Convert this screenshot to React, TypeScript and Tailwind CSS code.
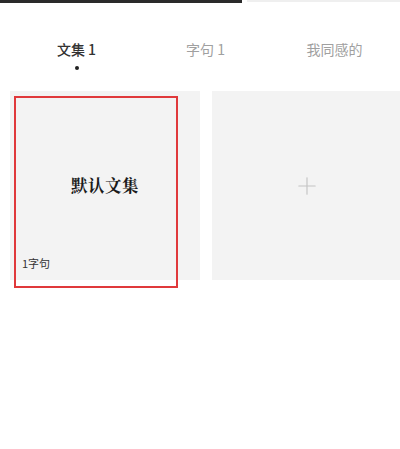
import { Plus } from 'lucide-react';

const tabs = [
  { label: '文集 1', active: true },
  { label: '字句 1', active: false },
  { label: '我同感的', active: false },
];

export default function App() {
  return (
    <div
      className="relative w-[400px] h-[449px] overflow-hidden bg-white"
      style={{ fontFamily: '"Noto Sans CJK SC", "Noto Sans", sans-serif' }}
    >
      {/* progress strip */}
      <div className="flex items-start h-[3px]">
        <div className="w-[242px] h-[3px] bg-[#2a2a2a]" />
        <div className="ml-[5px] flex-1 h-[2px] bg-[#efefef]" />
      </div>

      {/* tabs */}
      <div className="flex pl-[12px] pt-[36px]">
        {tabs.map((t) => (
          <div key={t.label} className="w-[129px] flex flex-col items-center">
            <span
              className={`text-[14px] leading-[20px] ${
                t.active ? 'text-[#333] font-medium' : 'text-[#a0a0a0]'
              }`}
            >
              {t.label}
            </span>
            <span
              className={`mt-[7px] w-[4px] h-[4px] rounded-full ${
                t.active ? 'bg-[#222]' : 'bg-transparent'
              }`}
            />
          </div>
        ))}
      </div>

      {/* collections grid */}
      <div className="flex gap-[12px] pl-[10px] pt-[21px] w-[420px]">
        <div className="relative w-[190px] h-[189px] shrink-0 bg-[#f3f3f3] flex items-center justify-center">
          <span
            className="text-[16.5px] font-bold text-[#1a1a1a] tracking-[0.5px]"
            style={{ fontFamily: '"Noto Serif CJK SC", "Liberation Serif", "Noto Sans CJK SC", serif' }}
          >
            默认文集
          </span>
          <span className="absolute left-[12px] bottom-[10px] text-[11px] leading-[14px] text-[#333]">
            1字句
          </span>
          <div className="absolute left-[4px] top-[5px] w-[164px] h-[192px] border-2 border-[#e0393b] pointer-events-none" />
        </div>
        <div className="w-[190px] h-[189px] shrink-0 bg-[#f3f3f3] flex items-center justify-center">
          <Plus size={28} strokeWidth={1} className="text-[#c4c4c4]" />
        </div>
      </div>
    </div>
  );
}
